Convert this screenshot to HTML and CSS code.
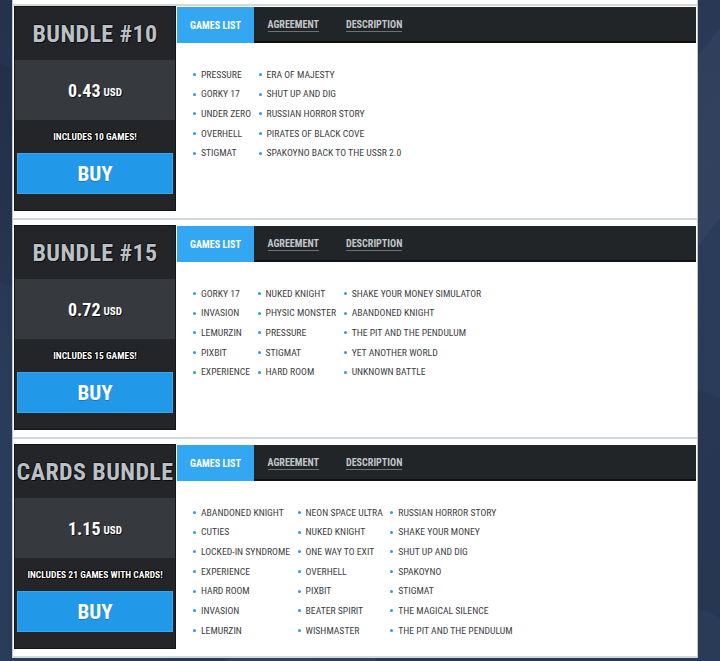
FILE: index.html
```html
<!DOCTYPE html>
<html lang="en">
<head>
<meta charset="utf-8">
<title>Bundles</title>
<link rel="stylesheet" href="styles.css">
</head>
<body>
<main class="page">
  <div class="page-top"></div>

  <section class="bundle">
    <aside class="card">
      <h2 class="card-title">BUNDLE #10</h2>
      <div class="card-price"><span class="amount">0.43</span><span class="currency">USD</span></div>
      <p class="card-note">INCLUDES 10 GAMES!</p>
      <a class="buy" href="#">BUY</a>
    </aside>
    <div class="panel">
      <nav class="tabs">
        <span class="tab active">GAMES LIST</span>
        <span class="tab"><u>AGREEMENT</u></span>
        <span class="tab"><u>DESCRIPTION</u></span>
      </nav>
      <div class="games">
        <ul>
          <li>PRESSURE</li><li>GORKY 17</li><li>UNDER ZERO</li><li>OVERHELL</li><li>STIGMAT</li>
        </ul>
        <ul>
          <li>ERA OF MAJESTY</li><li>SHUT UP AND DIG</li><li>RUSSIAN HORROR STORY</li><li>PIRATES OF BLACK COVE</li><li>SPAKOYNO BACK TO THE USSR 2.0</li>
        </ul>
      </div>
    </div>
  </section>

  <section class="bundle">
    <aside class="card">
      <h2 class="card-title">BUNDLE #15</h2>
      <div class="card-price"><span class="amount">0.72</span><span class="currency">USD</span></div>
      <p class="card-note">INCLUDES 15 GAMES!</p>
      <a class="buy" href="#">BUY</a>
    </aside>
    <div class="panel">
      <nav class="tabs">
        <span class="tab active">GAMES LIST</span>
        <span class="tab"><u>AGREEMENT</u></span>
        <span class="tab"><u>DESCRIPTION</u></span>
      </nav>
      <div class="games">
        <ul>
          <li>GORKY 17</li><li>INVASION</li><li>LEMURZIN</li><li>PIXBIT</li><li>EXPERIENCE</li>
        </ul>
        <ul>
          <li>NUKED KNIGHT</li><li>PHYSIC MONSTER</li><li>PRESSURE</li><li>STIGMAT</li><li>HARD ROOM</li>
        </ul>
        <ul>
          <li>SHAKE YOUR MONEY SIMULATOR</li><li>ABANDONED KNIGHT</li><li>THE PIT AND THE PENDULUM</li><li>YET ANOTHER WORLD</li><li>UNKNOWN BATTLE</li>
        </ul>
      </div>
    </div>
  </section>

  <section class="bundle">
    <aside class="card">
      <h2 class="card-title">CARDS BUNDLE</h2>
      <div class="card-price"><span class="amount">1.15</span><span class="currency">USD</span></div>
      <p class="card-note">INCLUDES 21 GAMES WITH CARDS!</p>
      <a class="buy" href="#">BUY</a>
    </aside>
    <div class="panel">
      <nav class="tabs">
        <span class="tab active">GAMES LIST</span>
        <span class="tab"><u>AGREEMENT</u></span>
        <span class="tab"><u>DESCRIPTION</u></span>
      </nav>
      <div class="games">
        <ul>
          <li>ABANDONED KNIGHT</li><li>CUTIES</li><li>LOCKED-IN SYNDROME</li><li>EXPERIENCE</li><li>HARD ROOM</li><li>INVASION</li><li>LEMURZIN</li>
        </ul>
        <ul>
          <li>NEON SPACE ULTRA</li><li>NUKED KNIGHT</li><li>ONE WAY TO EXIT</li><li>OVERHELL</li><li>PIXBIT</li><li>BEATER SPIRIT</li><li>WISHMASTER</li>
        </ul>
        <ul>
          <li>RUSSIAN HORROR STORY</li><li>SHAKE YOUR MONEY</li><li>SHUT UP AND DIG</li><li>SPAKOYNO</li><li>STIGMAT</li><li>THE MAGICAL SILENCE</li><li>THE PIT AND THE PENDULUM</li>
        </ul>
      </div>
    </div>
  </section>
</main>
</body>
</html>
```
FILE: styles.css
```css
* { box-sizing: border-box; }

html, body { height: 100%; }

body {
  margin: 0;
  font-family: "Roboto Condensed", "DejaVu Sans Condensed", Roboto, sans-serif;
  background:
    linear-gradient(128deg, transparent 0 60%, rgba(255,255,255,0.03) 60% 72%, transparent 72%),
    linear-gradient(205deg, transparent 0 40%, rgba(0,0,0,0.07) 40% 62%, transparent 62%),
    linear-gradient(160deg, #23324d 0%, #2b3c5a 45%, #2a3b58 100%);
  overflow: hidden;
}

.page {
  margin-left: 12px;
  width: 686px;
  background: #fff;
  border-left: 1px solid #c3c7cb;
  border-right: 1px solid #c3c7cb;
}

.page-top {
  height: 6px;
  border-bottom: 2px solid #d5d8da;
}

/* one bundle row: price card on the left, tabbed list on the right */
.bundle {
  display: flex;
  align-items: flex-start;
  padding: 5px 1px 7px 1px;
  border-bottom: 2px solid #d5d8da;
}
.page-top + .bundle { padding-top: 0; }

.card {
  width: 162px;
  flex: none;
  display: flex;
  flex-direction: column;
  background: #232528;
  border: 1px solid #141516;
  padding-bottom: 16px;
}

.card-title {
  margin: 0;
  height: 53px;
  display: flex;
  align-items: center;
  justify-content: center;
  padding-top: 1px;
  font-size: 24px;
  font-weight: 700;
  color: #bac0c5;
  letter-spacing: 0.4px;
  text-shadow: 1px 1px 0 #0b0c0d, -1px 0 0 #111, 0 -1px 0 #111;
  white-space: nowrap;
}

.card-price {
  height: 60px;
  background: #36393d;
  display: flex;
  align-items: center;
  justify-content: center;
  gap: 3px;
  color: #fff;
  font-weight: 700;
  text-shadow: 1px 1px 0 #111;
}
.amount { font-size: 18px; }
.currency { font-size: 11px; padding-top: 4px; }

.card-note {
  margin: 0;
  height: 32px;
  display: flex;
  align-items: center;
  justify-content: center;
  color: #fff;
  font-size: 9.5px;
  font-weight: 700;
  text-shadow: 1px 1px 0 #000, -1px 0 0 #000, 0 -1px 0 #000, 1px 0 0 #000;
  white-space: nowrap;
}

.buy {
  margin: 1px 2px 0;
  height: 41px;
  display: flex;
  align-items: center;
  justify-content: center;
  background: #2298e8;
  border: 1px solid #3aa5ee;
  color: #fff;
  font-size: 21px;
  font-weight: 700;
  text-decoration: none;
  text-shadow: 0 1px 0 #1877bd;
}

/* right-hand side */
.panel {
  flex: 1;
  margin-left: 1px;
  margin-top: 1px;
}

.tabs {
  display: flex;
  height: 36px;
  background: linear-gradient(#222528 0 34px, #0e1011 34px);
}

.tab {
  display: flex;
  align-items: center;
  padding: 0 13.5px;
  font-size: 10.1px;
  font-weight: 700;
  color: #c3c7cb;
}
.tab u {
  text-decoration: none;
  border-bottom: 1px solid #6d7276;
  padding-bottom: 1px;
  margin-top: 1px;
}
.tab.active {
  background: #34a7f3;
  color: #fff;
  width: 77px;
  justify-content: center;
  padding: 0;
}

.games {
  display: flex;
  gap: 7.5px;
  padding: 21.5px 0 0 16px;
}

.games ul {
  margin: 0;
  padding: 0;
  list-style: none;
}

.games li {
  position: relative;
  height: 19.7px;
  line-height: 19.7px;
  padding-left: 8px;
  font-size: 9.7px;
  color: #3d4044;
  white-space: nowrap;
}
.games li::before {
  content: "";
  position: absolute;
  left: 0;
  top: 8.5px;
  width: 3px;
  height: 3px;
  border-radius: 50%;
  background: #2a9be8;
}
```
